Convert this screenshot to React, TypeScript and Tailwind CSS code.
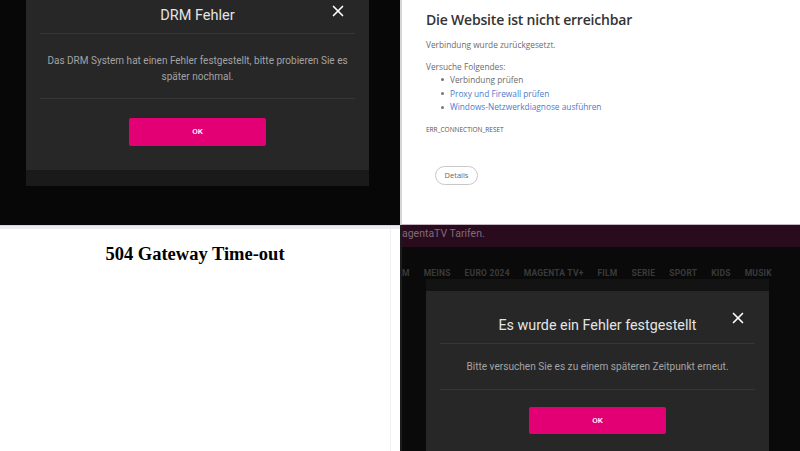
import { X } from "lucide-react";

const modalFont = { fontFamily: "Roboto, 'Noto Sans', sans-serif" };

const DrmPanel = () => {
  return (
    <div className="bg-[#070707] overflow-hidden pl-[26px]" style={modalFont}>
      <div className="w-[343px]">
        <div className="bg-[#272727] px-[14px]">
          <div className="relative h-[34px] border-b border-[#363636] flex items-center justify-center">
            <h2 className="text-[14.5px] text-[#e4e4e4] leading-none -mt-[1px]">DRM Fehler</h2>
            <X className="absolute right-[8px] top-[2px] text-white" size={18} strokeWidth={2.2} />
          </div>
          <div className="h-[65px] border-b border-[#363636] flex items-center justify-center text-center">
            <p className="mt-[5px] text-[10px] leading-[16px] text-[#a3a3a3] whitespace-nowrap">
              Das DRM System hat einen Fehler festgestellt, bitte probieren Sie es
              <br />
              später nochmal.
            </p>
          </div>
          <div className="h-[71px] flex justify-center pt-[19px]">
            <button className="w-[137px] h-[28px] rounded-[2px] bg-[#e20074] text-white text-[8px] font-medium">
              OK
            </button>
          </div>
        </div>
        <div className="h-[16px] bg-[#1a1a1a]" />
      </div>
    </div>
  );
};

const ChromeError = () => {
  return (
    <div
      className="bg-white border-l-2 border-[#d6d6d6] border-b border-b-[#c4b7c0] pl-[24px] pt-[10px]"
      style={{ fontFamily: "'Open Sans', 'Noto Sans', sans-serif" }}
    >
      <h1 className="text-[14px] font-semibold text-[#333] leading-[20px] tracking-[-0.2px]">
        Die Website ist nicht erreichbar
      </h1>
      <p className="mt-[9px] text-[8.3px] text-[#6b6b6b] leading-[12px]">
        Verbindung wurde zurückgesetzt.
      </p>
      <p className="mt-[10px] text-[8.3px] text-[#6b6b6b] leading-[12px]">Versuche Folgendes:</p>
      <ul className="pl-[15px] text-[8.3px] leading-[13.7px]">
        <li className="flex items-center gap-[6px] text-[#6b6b6b]">
          <span className="w-[3px] h-[3px] rounded-full bg-[#777]" />
          Verbindung prüfen
        </li>
        <li className="flex items-center gap-[6px] text-[#4a7ccc]">
          <span className="w-[3px] h-[3px] rounded-full bg-[#777]" />
          Proxy und Firewall prüfen
        </li>
        <li className="flex items-center gap-[6px] text-[#4a7ccc]">
          <span className="w-[3px] h-[3px] rounded-full bg-[#777]" />
          Windows-Netzwerkdiagnose ausführen
        </li>
      </ul>
      <p className="mt-[11px] text-[6.5px] text-[#555] leading-[10px]">ERR_CONNECTION_RESET</p>
      <button className="mt-[31px] ml-[9px] w-[43px] h-[19px] rounded-full border border-[#c8c8c8] text-[7.5px] text-[#666] flex items-center justify-center">
        Details
      </button>
    </div>
  );
};

const GatewayTimeout = () => {
  return (
    <div className="bg-white flex flex-col">
      <div className="h-[4px] bg-[#ebebf0] border-t border-[#d6d6de]" />
      <div className="flex-1 w-[391px] border-r border-[#f0f0f0] pt-[13px]">
        <h1
          className="text-center text-[18.5px] font-bold text-black leading-[24px]"
          style={{ fontFamily: "'Liberation Serif', 'Times New Roman', serif" }}
        >
          504 Gateway Time-out
        </h1>
      </div>
    </div>
  );
};

const navItems = ["M", "MEINS", "EURO 2024", "MAGENTA TV+", "FILM", "SERIE", "SPORT", "KIDS", "MUSIK"];

const MagentaError = () => {
  return (
    <div className="bg-[#0a0a0a] overflow-hidden flex flex-col border-l-2 border-[#1c1c1c]" style={modalFont}>
      <div className="h-[22px] bg-[#2a0a1d] flex items-center">
        <span className="text-[10.5px] text-[#7d6d78] whitespace-nowrap -mt-[4px]">agentaTV Tarifen.</span>
      </div>
      <div className="h-[32px] flex items-start gap-[14px] text-[8.5px] leading-[10px] font-bold tracking-[0.2px] text-[#3a3a3a] whitespace-nowrap pt-[21px]">
        {navItems.map((item) => (
          <span key={item}>{item}</span>
        ))}
      </div>
      <div className="ml-[24px] w-[343px] h-[12px] bg-[#131313]" />
      <div className="ml-[24px] w-[343px] flex-1 bg-[#272727] px-[14px]">
        <div className="relative h-[53px] border-b border-[#363636] flex items-center justify-center">
          <h2 className="text-[14.3px] text-[#e4e4e4] leading-none mt-[16px]">Es wurde ein Fehler festgestellt</h2>
          <X className="absolute right-[8px] top-[18px] text-white" size={18} strokeWidth={2.2} />
        </div>
        <div className="h-[46px] border-b border-[#363636] flex items-center justify-center">
          <p className="text-[10.1px] text-[#a3a3a3]">Bitte versuchen Sie es zu einem späteren Zeitpunkt erneut.</p>
        </div>
        <div className="flex justify-center pt-[17px]">
          <button className="w-[137px] h-[27px] rounded-[2px] bg-[#e20074] text-white text-[8px] font-medium">
            OK
          </button>
        </div>
      </div>
    </div>
  );
};

export default function App() {
  return (
    <div className="w-[800px] h-[451px] grid grid-cols-[400px_400px] grid-rows-[225px_226px] overflow-hidden">
      <DrmPanel />
      <ChromeError />
      <GatewayTimeout />
      <MagentaError />
    </div>
  );
}
